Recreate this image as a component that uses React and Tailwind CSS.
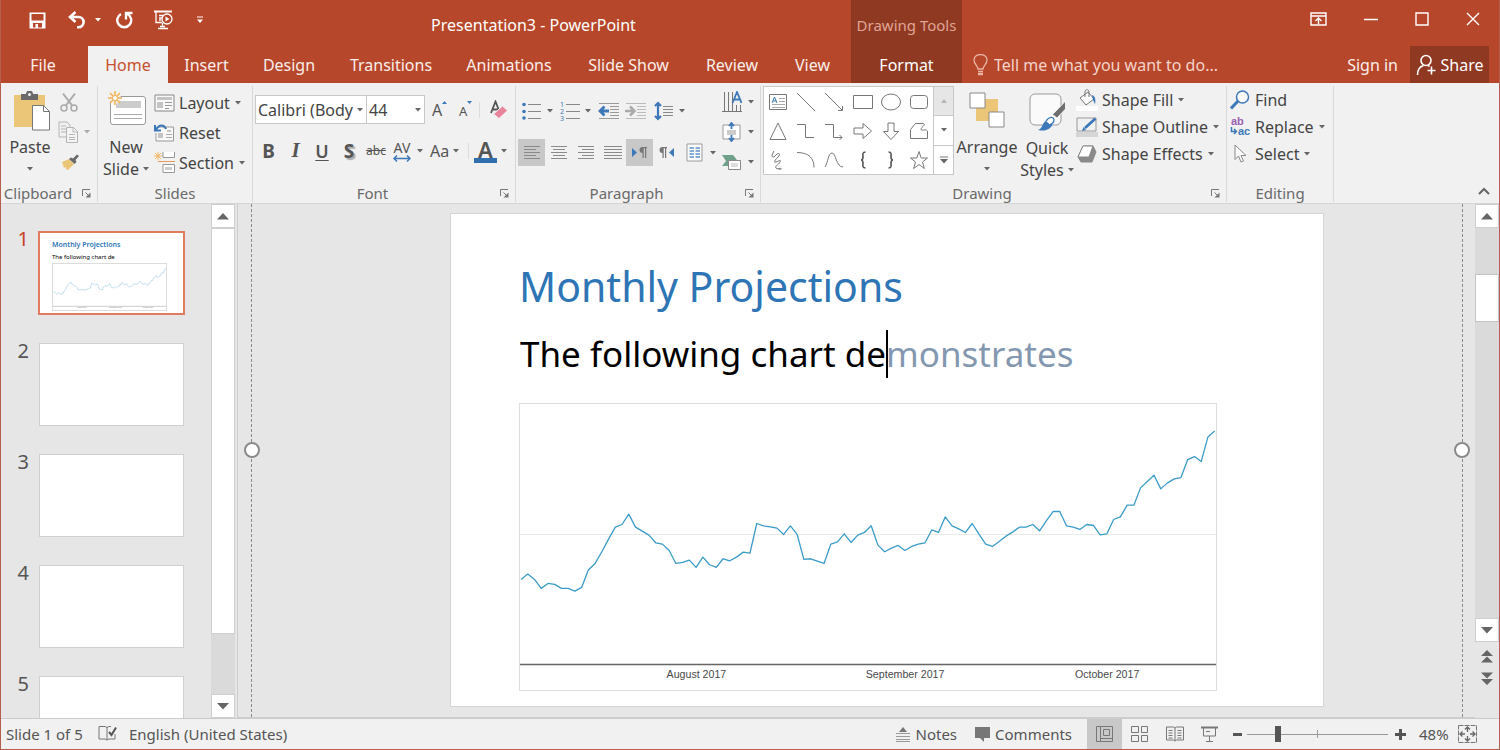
import React from "react";

/* ---------- data ---------- */

const DAILY = [
  539, 523, 539, 566, 551, 554, 566, 566, 574, 563, 511, 491, 456, 418, 382, 374, 343, 382, 394, 406, 429, 433, 452,
  491, 488, 481, 503, 472, 495, 503, 477, 483, 472, 457, 460, 371, 378, 381, 385, 404, 378, 404, 479, 477, 484, 491,
  433, 426, 402, 428, 406, 398, 378, 436, 456, 445, 437, 452, 440, 433, 429, 390, 398, 351, 378, 387, 398, 371, 403,
  433, 440, 425, 409, 397, 382, 382, 374, 393, 363, 335, 335, 378, 382, 389, 374, 377, 405, 402, 359, 351, 316, 316,
  264, 245, 226, 267, 249, 237, 233, 179, 170, 185, 111, 93,
];
const LINE = DAILY.map((v, i) => `${((i * 2084) / (DAILY.length - 1) + 3).toFixed(1)},${v - 12}`).join(" ");

const TABS = [
  ["File", "w-[84px]"],
  ["Home", "w-[80px]"],
  ["Insert", "w-[77px]"],
  ["Design", "w-[88px]"],
  ["Transitions", "w-[116px]"],
  ["Animations", "w-[120px]"],
  ["Slide Show", "w-[119px]"],
  ["Review", "w-[88px]"],
  ["View", "w-[73px]"],
];

/* ---------- small parts ---------- */

function Svg({ w = 20, h = 20, children, className = "", ...rest }) {
  return (
    <svg
      width={w}
      height={h}
      viewBox={`0 0 ${w} ${h}`}
      fill="none"
      stroke="#777"
      className={`shrink-0 ${className}`}
      aria-hidden="true"
      {...rest}
    >
      {children}
    </svg>
  );
}

function Caret({ color = "#666", className = "" }) {
  return (
    <Svg w={6} h={4} className={className}>
      <path d="M0 0h6L3 3.6z" fill={color} stroke="none" />
    </Svg>
  );
}

function Btn({ label, className = "", children }) {
  return (
    <button type="button" aria-label={label} className={`flex shrink-0 items-center ${className}`}>
      {children}
    </button>
  );
}

function Launcher({ label }) {
  return (
    <Btn label={label}>
      <Svg w={9} h={9}>
        <path d="M.5 7V.5H8M3.500 3.500 7 7" />
        <path d="M8.500 3.500v5h-5z" fill="#777" stroke="none" />
      </Svg>
    </Btn>
  );
}

function Group({ label, launcher, className = "", children }) {
  return (
    <section aria-label={label} className={`flex shrink-0 flex-col ${className}`}>
      <div className="flex h-[100px]">{children}</div>
      <div className="flex h-5 items-center text-[15px] leading-5 text-[#6a6a6a]">
        <span className={`flex-1 text-center ${launcher ? "pr-2" : ""}`}>{label}</span>
        {launcher && (
          <span className="pr-[6px]">
            <Launcher label={`${label} settings`} />
          </span>
        )}
      </div>
    </section>
  );
}

function Divider() {
  return <div className="mt-[3px] mb-px w-px shrink-0 bg-[#d9d9d9]" />;
}

function Command({ icon, text, caret, className = "h-[30px]" }) {
  return (
    <button type="button" className={`flex items-center gap-[5px] text-[16px] text-[#444] ${className}`}>
      <span className="flex w-5 justify-center">{icon}</span>
      <span className="whitespace-nowrap">{text}</span>
      {caret && <Caret />}
    </button>
  );
}

function Lines({ rows, w = 18, color = "#8a8a8a" }) {
  return (
    <Svg w={w} h={18} stroke={color}>
      {rows.map(([a, b], i) => (
        <path key={i} d={`M${a} ${2.5 + i * 3}H${b}`} />
      ))}
    </Svg>
  );
}

function Chart({ small = false, className = "" }) {
  return (
    <svg viewBox="0 0 2091 858" className={className} role="img" aria-label="Monthly projections line chart">
      {!small && <path d="M0 392H2091" stroke="#e9e9e9" strokeWidth="1" vectorEffect="non-scaling-stroke" />}
      <path
        d="M0 783H2091"
        stroke={small ? "#cccccc" : "#666"}
        strokeWidth={small ? 1 : 1.5}
        vectorEffect="non-scaling-stroke"
      />
      <polyline
        points={LINE}
        fill="none"
        stroke={small ? "#b3d5e6" : "#3b9bc8"}
        strokeWidth={small ? 0.8 : 1.3}
        strokeLinejoin="round"
        vectorEffect="non-scaling-stroke"
      />
      <g fill={small ? "#888" : "#4a4a4a"} fontSize="32" textAnchor="middle" fontFamily='"Liberation Sans", sans-serif'>
        <text x="530" y="823">August 2017</text>
        <text x="1157" y="823">September 2017</text>
        <text x="1764" y="823">October 2017</text>
      </g>
    </svg>
  );
}

/* ---------- header ---------- */

function QuickAccess() {
  return (
    <div className="flex h-[46px] items-center pl-7 text-white">
      <div className="flex items-center pb-[6px]">
        <Btn label="Save" className="w-[39px]">
          <Svg w={17} h={17} stroke="none">
            <path
              d="M.5.5h16v16H.5zM2.500 2v6.500h12V2zM4 11v4.500h2.500V12H9v3.500h4V11z"
              fill="#fff"
              fillRule="evenodd"
            />
          </Svg>
        </Btn>
        <Btn label="Undo" className="w-[27px]">
          <Svg w={18} h={18} stroke="#fff" strokeWidth="2.600">
            <path d="M7.500 1 2 6l5.500 5M2.500 6h8a5 5 0 0 1 0 10.200H9" />
          </Svg>
        </Btn>
        <Btn label="Undo history" className="w-[20px]">
          <Caret color="#fff" />
        </Btn>
        <Btn label="Repeat" className="w-[38px]">
          <Svg w={18} h={18} stroke="#fff" strokeWidth="2.400">
            <path d="M6 3A7 7 0 1 0 12.500 3M11 8.500V2h6.500" />
          </Svg>
        </Btn>
        <Btn label="Start from beginning" className="w-[44px]">
          <Svg w={20} h={20} stroke="#fff" strokeWidth="1.300">
            <path d="M1 1.500h18" strokeWidth="2" />
            <path d="M3 2v10.500h6M6 5.500h4M6 8h3M6 10h2M9.500 13v4M5 18.500h10M7 16.500h5" />
            <circle cx="14" cy="9" r="5" />
            <path d="m12.500 6.500 4 2.500-4 2.500z" fill="#fff" stroke="none" />
          </Svg>
        </Btn>
        <Btn label="Customize toolbar">
          <Svg w={6} h={8}>
            <path d="M0 1h6" stroke="#fff" />
            <path d="M0 3.500h6L3 7z" fill="#fff" stroke="none" />
          </Svg>
        </Btn>
      </div>
      <h1 className="flex-1 pt-[3px] pl-[15px] text-center text-[16px]">Presentation3 - PowerPoint</h1>
    </div>
  );
}

function Header() {
  return (
    <header className="flex h-[83px] shrink-0 bg-[#b7472a] text-white">
      <div className="flex flex-col">
        <QuickAccess />
        <nav className="flex h-[37px]">
          {TABS.map(([name, w]) => (
            <button
              key={name}
              type="button"
              className={`text-[16px] ${w} ${
                name === "Home" ? "ml-[3px] bg-[#f1f1f1] text-[#c8502f]" : "text-[#fbeeea]"
              }`}
            >
              {name}
            </button>
          ))}
        </nav>
      </div>
      <div className="ml-[2px] flex w-[111px] flex-col bg-[#8f3822]">
        <div className="flex h-[46px] items-center justify-center pt-1 text-[15px] whitespace-nowrap text-[#e0a595]">
          Drawing Tools
        </div>
        <button type="button" className="h-[37px] text-[16px]">
          Format
        </button>
      </div>
      <div className="flex flex-1 flex-col">
        <div className="flex h-[46px] items-center justify-end gap-[37px] pr-[19px] pb-2">
          <Btn label="Ribbon display options">
            <Svg w={17} h={15} stroke="#fff" strokeWidth="1.400">
              <path d="M1 1h15v12H1zM1 4h15M8.500 12V6.500M5.500 9l3-3 3 3" />
            </Svg>
          </Btn>
          <Btn label="Minimize">
            <Svg w={14} h={14} stroke="#fff" strokeWidth="1.500">
              <path d="M0 7.500h14" />
            </Svg>
          </Btn>
          <Btn label="Maximize">
            <Svg w={14} h={14} stroke="#fff" strokeWidth="1.400">
              <path d="M1 1h12v12H1z" />
            </Svg>
          </Btn>
          <Btn label="Close">
            <Svg w={14} h={14} stroke="#fff" strokeWidth="1.400">
              <path d="m1 1 12 12M13 1 1 13" />
            </Svg>
          </Btn>
        </div>
        <div className="flex h-[37px] items-center pr-[10px] text-[16px]">
          <label className="flex flex-1 items-center gap-[6px] pl-[11px]">
            <Svg w={15} h={22} stroke="#e8b5a6" strokeWidth="1.300">
              <path d="M5 15c0-3-4-4.500-4-9a6.500 5.500 0 0 1 13 0c0 4.500-4 6-4 9zM5 17.500h5" />
              <path d="M5 20h5" strokeWidth="2.400" />
            </Svg>
            <input
              aria-label="Tell me what you want to do"
              placeholder="Tell me what you want to do..."
              className="w-full bg-transparent outline-none placeholder:text-[#f4d3ca] placeholder:opacity-100"
            />
          </label>
          <button type="button" className="mr-3 whitespace-nowrap text-[#fbeeea]">
            Sign in
          </button>
          <button type="button" className="flex h-[37px] w-[79px] items-center justify-center gap-[5px] bg-[#8f3822]">
            <Svg w={20} h={22} stroke="#fff" strokeWidth="1.600">
              <circle cx="10" cy="6.500" r="5" />
              <path d="M1.500 21c0-5 2.500-8.500 6-9.500M12 11.500l1.500 1M15.500 12.500v8M11.500 16.500h8" />
            </Svg>
            Share
          </button>
        </div>
      </div>
    </header>
  );
}

/* ---------- ribbon ---------- */

function Clipboard() {
  return (
    <Group label="Clipboard" launcher className="w-[95px]">
      <button type="button" className="flex w-14 flex-col items-center pt-2 text-[16px] leading-6 text-[#444]">
        <Svg w={36} h={40} className="ml-1">
          <path d="M0 4h31v32H0z" fill="#ecc678" stroke="none" />
          <path d="M7 3h5a3.500 3.500 0 0 1 7 0h5v6H7z" fill="#6a6a6a" stroke="none" />
          <circle cx="15.500" cy="3.500" r="1.500" fill="#f1f1f1" stroke="none" />
          <path d="M18.500 14.500h11l6 6v18.500h-17z" fill="#fff" />
          <path d="M29.500 14.500v6h6" />
        </Svg>
        <span className="mt-1">Paste</span>
        <Caret className="mt-2" />
      </button>
      <div className="flex flex-col pt-1">
        <Btn label="Cut" className="h-[30px] pl-[2px]">
          <Svg w={18} h={20} stroke="#aaa" strokeWidth="1.500">
            <path d="M3 1.500 12.500 14M15 1.500 5.500 14" strokeWidth="2" />
            <circle cx="4" cy="16" r="3" />
            <circle cx="14" cy="16" r="3" />
          </Svg>
        </Btn>
        <Btn label="Copy" className="h-[30px] gap-[6px]">
          <Svg w={20} h={22} stroke="#b5b5b5">
            <path d="M1 1h8l3 3v12H1zM3 5h5M3 8h5M3 11h5" />
            <path d="M8.500 6.500h7l4 4v11h-11z" fill="#f4f4f4" />
            <path d="M15 6.500v4.500h4M11 13.500h6M11 16.500h6M11 18.500h6" />
          </Svg>
          <Caret color="#aaa" />
        </Btn>
        <Btn label="Format painter" className="h-[30px] pl-[3px]">
          <Svg w={18} h={16} stroke="none">
            <path d="M1 8 8 5l5 5-6 6-2-1v-2l-2 1z" fill="#ecc678" />
            <path d="m8 5 2-1.500 2 1L16 .5 18 2l-3.500 4 1 2-2 2z" fill="#6a6a6a" />
          </Svg>
        </Btn>
      </div>
    </Group>
  );
}

const Spark = ({ x, y }) => (
  <path
    transform={`translate(${x} ${y})`}
    d="M0-7v14M-7 0H7M-5-5 5 5M5-5-5 5"
    stroke="#eeb25a"
    strokeWidth="1.500"
  />
);

function Slides() {
  return (
    <Group label="Slides" className="w-[154px]">
      <button type="button" className="flex w-[56px] flex-col items-center pt-[7px] text-[16px] leading-[22px] text-[#444]">
        <Svg w={39} h={36}>
          <rect x="3.500" y="6.500" width="35" height="28" rx="2.500" fill="#fff" stroke="#999" />
          <path d="M9 11h25v7H9z" fill="#ccc" stroke="none" />
          <path d="M7 24.500h28M7 28.500h28" stroke="#aaa" />
          <circle cx="8" cy="8" r="6" fill="#f6efe2" stroke="none" />
          <Spark x={8} y={8} />
          <circle cx="8" cy="8" r="2.500" fill="#fff" stroke="#eeb25a" />
        </Svg>
        <span className="mt-[10px]">New</span>
        <span className="flex items-center gap-1">
          Slide <Caret />
        </span>
      </button>
      <div className="flex flex-col pt-[5px]">
        <Command
          caret
          text="Layout"
          icon={
            <Svg w={21} h={18}>
              <path d="M1 1h19v16H1z" fill="#f8f8f8" stroke="#888" />
              <path d="M3 3h15v3H3zM3 8h6v6H3z" fill="#c4c4c4" stroke="none" />
              <path d="M11 8.500h7M11 11.500h7M11 14.500h4" stroke="#999" />
            </Svg>
          }
        />
        <Command
          text="Reset"
          icon={
            <Svg w={21} h={18}>
              <path d="M4 3h15.500v14H2V9" fill="#f8f8f8" stroke="#999" />
              <path d="M4 9h5v5H4zM13 6h4v2h-4z" fill="#c4c4c4" stroke="none" />
              <path d="M12 10.500h6M12 13.500h6" stroke="#aaa" />
              <path d="M2 5.500c3-5 8-5.500 10-.5M1 1v5.500h6" stroke="#3d78b8" strokeWidth="2" />
            </Svg>
          }
        />
        <Command
          caret
          text="Section"
          icon={
            <Svg w={21} h={22} stroke="#999">
              <path d="M9 0v5.500h11.500V0M9 12.500h11.500v8H9z" fill="#fff" />
              <path d="M4 9.500h17" stroke="#e89b5c" />
              <path d="M11 15h7v3h-7z" fill="#ccc" stroke="none" />
              <g transform="translate(4 4) scale(.6)">
                <Spark x={0} y={0} />
              </g>
            </Svg>
          }
        />
      </div>
    </Group>
  );
}

function FontGroup() {
  return (
    <Group label="Font" launcher className="w-[262px]">
      <div className="flex flex-col pl-[2px]">
        <div className="mt-3 flex h-[29px] items-center">
          <div className="relative flex h-full items-center border border-[#c8c8c8] bg-white">
            <select
              aria-label="Font name"
              className="h-full w-[110px] appearance-none overflow-hidden bg-transparent pr-[6px] pl-[2px] text-[16px] text-[#444]"
            >
              <option>Calibri (Body</option>
            </select>
            <Caret className="pointer-events-none absolute right-[3px]" />
          </div>
          <div className="relative -ml-px flex h-full items-center border border-[#c8c8c8] bg-white">
            <select aria-label="Font size" className="h-full w-[57px] appearance-none bg-transparent pl-[2px] text-[16px] text-[#444]">
              <option>44</option>
            </select>
            <Caret className="pointer-events-none absolute right-[3px]" />
          </div>
          <Btn label="Increase font size" className="ml-[7px] h-6 w-[27px] items-end text-[16px] leading-6 text-[#555]">
            A
            <Svg w={5} h={4} className="mb-[17px]">
              <path d="M0 3h5L2.500 0z" fill="#3d78b8" stroke="none" />
            </Svg>
          </Btn>
          <Btn label="Decrease font size" className="h-6 w-[20px] items-end text-[13px] leading-[22px] text-[#555]">
            A
            <Svg w={5} h={4} className="mb-[17px]">
              <path d="M0 0h5L2.500 3z" fill="#3d78b8" stroke="none" />
            </Svg>
          </Btn>
          <div className="mr-[9px] h-4 w-px bg-[#dcdcdc]" />
          <Btn label="Clear formatting">
            <Svg w={20} h={20} stroke="#555" strokeWidth="1.800">
              <path d="M2 13 6.500 1.500 11 13M3.500 9.500H9" />
              <path d="m4.500 14 9-8 5 4.500-8.500 8z" fill="#e8849a" stroke="#f1f1f1" strokeWidth="1" />
            </Svg>
          </Btn>
        </div>
        <div className="mt-[14px] flex h-[26px] items-center text-[#555]">
          <button type="button" className="w-[27px] text-center text-[19px] font-bold">
            B
          </button>
          <button type="button" className="w-[27px] text-center font-['Liberation_Serif',serif] text-[21px] font-bold italic">
            I
          </button>
          <button type="button" className="w-[26px] text-center text-[18px] font-semibold underline decoration-1 underline-offset-2">
            U
          </button>
          <button type="button" className="w-[28px] text-center text-[19px] font-bold text-shadow-[2px_2px_1px_#aaa]">
            S
          </button>
          <button type="button" className="w-[26px] text-center text-[12px] line-through">
            abc
          </button>
          <Btn label="Character spacing" className="ml-1 w-[37px] gap-[6px]">
            <span className="flex flex-col items-center text-[14px] leading-[14px]">
              AV
              <Svg w={18} h={7} stroke="#3d78b8" strokeWidth="1.500">
                <path d="M1 3.500h16M4 .5l-3 3 3 3M14 .5l3 3-3 3" />
              </Svg>
            </span>
            <Caret />
          </Btn>
          <button type="button" className="flex w-[38px] items-center gap-1 text-[16px]">
            Aa
            <Caret />
          </button>
          <div className="mr-[5px] h-4 w-px bg-[#dcdcdc]" />
          <Btn label="Font color" className="gap-1">
            <span className="flex flex-col items-center text-[22px] leading-[18px] font-semibold">
              A
              <span className="h-[5px] w-[23px] bg-[#2f6fae]" />
            </span>
            <Caret />
          </Btn>
        </div>
      </div>
    </Group>
  );
}

function Paragraph() {
  const cell = "flex h-[27px] w-[27px] shrink-0 items-center justify-center";
  return (
    <Group label="Paragraph" launcher className="w-[244px]">
      <div className="flex w-[205px] flex-col pl-[2px]">
        <div className="mt-[14px] flex h-7 items-center">
          <Btn label="Bullets" className="w-[38px] gap-[6px] pl-1">
            <Svg w={19} h={18} stroke="#888">
              <path d="M6 2.500h13M6 9.500h13M6 16.500h13" />
              <g fill="#3d78b8" stroke="none">
                <circle cx="2" cy="2.500" r="1.800" />
                <circle cx="2" cy="9.500" r="1.800" />
                <circle cx="2" cy="16" r="1.800" />
              </g>
            </Svg>
            <Caret />
          </Btn>
          <Btn label="Numbering" className="w-[40px] gap-[5px] pl-1">
            <Svg w={20} h={26} stroke="#888">
              <path d="M6 6.500h14M6 13.500h14M6 20.500h14" />
              <g fill="#3d78b8" stroke="none" fontSize="7">
                <text x="0" y="9">1</text>
                <text x="0" y="16">2</text>
                <text x="0" y="23">3</text>
              </g>
            </Svg>
            <Caret />
          </Btn>
          <Btn label="Decrease indent" className="w-[27px] pl-[2px]">
            <Svg w={21} h={18} stroke="#999">
              <path d="M1 1.500h20M12 4.500h9M12 7.500h9M12 10.500h9M12 13.500h9M1 16.500h20" />
              <path d="M11 9H3M6.500 4.500 2 9l4.500 4.500" stroke="#3d78b8" strokeWidth="2.800" />
            </Svg>
          </Btn>
          <Btn label="Increase indent" className="w-[28px] pl-[2px]">
            <Svg w={21} h={18} stroke="#bbb">
              <path d="M1 1.500h20M12 4.500h9M12 7.500h9M12 10.500h9M12 13.500h9M1 16.500h20" />
              <path d="M0 9h8M5 4.500 9.500 9 5 13.500" stroke="#aaa" strokeWidth="2.500" />
            </Svg>
          </Btn>
          <Btn label="Line spacing" className="gap-[6px] pl-[3px]">
            <Svg w={19} h={20} stroke="#888">
              <path d="M9 5.500h10M9 8.500h10M9 11.500h10M9 14.500h10" />
              <path d="M4 2v16M1 5l3-3 3 3M1 15l3 3 3-3" stroke="#3d78b8" strokeWidth="2.200" />
            </Svg>
            <Caret />
          </Btn>
        </div>
        <div className="mt-[14px] flex h-[27px] items-center">
          <button type="button" aria-label="Align left" className={`${cell} bg-[#c8c8c8]`}>
            <Lines rows={[[1, 17], [1, 13], [1, 17], [1, 13], [1, 17]]} />
          </button>
          <button type="button" aria-label="Center" className={cell}>
            <Lines rows={[[1, 17], [3, 15], [1, 17], [3, 15], [1, 17]]} />
          </button>
          <button type="button" aria-label="Align right" className={cell}>
            <Lines rows={[[1, 17], [5, 17], [1, 17], [5, 17], [1, 17]]} />
          </button>
          <button type="button" aria-label="Justify" className={cell}>
            <Lines rows={[[0, 18], [0, 18], [0, 18], [0, 18], [0, 18]]} />
          </button>
          <button type="button" aria-label="Left to right" className={`${cell} bg-[#c8c8c8]`}>
            <Svg w={17} h={14} stroke="none">
              <path d="M1 2v9l5-4.500z" fill="#3d78b8" />
              <path d="M16 1h-4.500a3 3 0 0 0 0 6v5h1.200V2.200H14V12h1.200V2.200h.8z" fill="#777" />
            </Svg>
          </button>
          <button type="button" aria-label="Right to left" className={cell}>
            <Svg w={17} h={14} stroke="none">
              <path d="M16 2v9l-5-4.500z" fill="#3d78b8" />
              <path d="M9 1H4.500a3 3 0 0 0 0 6v5h1.200V2.200H7V12h1.200V2.200H9z" fill="#777" />
            </Svg>
          </button>
          <Btn label="Columns" className="gap-[7px] pl-[6px]">
            <Svg w={17} h={19}>
              <path d="M1 1h15v17H1z" fill="#fff" stroke="#999" />
              <path d="M3.500 5h4.500M3.500 8h4.500M3.500 11h4.500M3.500 14h4.500M9.500 5H14M9.500 8H14M9.500 11H14M9.500 14H14" stroke="#86abd6" strokeWidth="2" />
            </Svg>
            <Caret />
          </Btn>
        </div>
      </div>
      <div className="flex flex-col pt-1">
        <Btn label="Text direction" className="h-[30px] gap-[6px] pl-px">
          <Svg w={20} h={22} stroke="#777">
            <path d="M2.500 1v19M6.500 1v19M10.500 1v19M14.500 14v6M18.500 14v6M0 20.500h20" />
            <path d="M10.500 12 15 1l4.500 11M12 8.500h6" stroke="#3d78b8" strokeWidth="1.800" />
          </Svg>
          <Caret />
        </Btn>
        <Btn label="Align text" className="h-[30px] gap-[6px]">
          <Svg w={21} h={20}>
            <path d="M2 3h17v14H2z" fill="#fff" stroke="#999" />
            <path d="M6 8h9v5H6z" fill="#ccc" stroke="none" />
            <path d="M10.500 7V2M8 4l2.500-3L13 4M10.500 13v5M8 16l2.500 3 2.500-3" stroke="#3d78b8" strokeWidth="1.800" />
          </Svg>
          <Caret />
        </Btn>
        <Btn label="Convert to SmartArt" className="h-[30px] gap-[6px]">
          <Svg w={21} h={16}>
            <path d="M1 1h11l4 5-4 6H1l4-5z" fill="#6fa08a" stroke="none" />
            <path d="M7.500 6.500h12v9h-12z" fill="#fff" stroke="#888" />
            <path d="M10 9h7v4h-7z" fill="#ddd" stroke="none" />
          </Svg>
          <Caret />
        </Btn>
      </div>
    </Group>
  );
}

const SHAPES = [
  ["Text box", <g key="0"><path d="M1.500 2.500h17v15h-17z" /><path d="m4 11 2.500-6L9 11M5 9h3.500" stroke="#3d78b8" /><path d="M11 6.500h6M11 9.500h6M4 12.500h13M4 15.500h13" stroke="#aaa" /></g>],
  ["Line", <path key="1" d="m1 1 18 18" />],
  ["Arrow line", <path key="2" d="m1 1 17 17M18.500 14v4.500H14" />],
  ["Rectangle", <path key="3" d="M.5 3.500h19v13H.5z" />],
  ["Oval", <ellipse key="4" cx="10" cy="10" rx="9.500" ry="8" />],
  ["Rounded rectangle", <rect key="5" x="1.500" y="3.500" width="17" height="13" rx="3" />],
  ["Triangle", <path key="6" d="M10 2 18 18.500H2z" />],
  ["Elbow connector", <path key="7" d="M1 3.500h8.500v13H18" />],
  ["Elbow arrow", <path key="8" d="M1 3.500h8.500v13H18M15.500 14l2.500 2.500-2.500 2.500" />],
  ["Right arrow", <path key="9" d="M1 7h9V2.500l8.500 7.500-8.500 7.500V13H1z" />],
  ["Down arrow", <path key="10" d="M7 2h6v8.500h4.500L10 18.500 2.500 10.500H7z" />],
  ["Freeform", <path key="11" d="M1.500 17.500v-9l5-6h8c3 2-4 4-2 6.500 1.500 1 4-1.500 6 1v7.500z" />],
  ["Scribble", <path key="12" d="M6 1C2 7 5 9 8 5c3-3 5-1 2 2s-5 6-2 5 5-3 4 0-6 4-4 6 6-1 5 1-2 1-2 0" />],
  ["Arc", <path key="13" d="M1 2.500c12 0 17 6 17 15" />],
  ["Curve", <path key="14" d="M1 17C4 13 4 3 8 3s4 14 11 14" />],
  ["Left brace", <path key="15" d="M12.500 2C9 2 10 5 10 7s-1 3-2 3c1 0 2 1 2 3s-1 5 2.500 5" stroke="#555" strokeWidth="1.600" />],
  ["Right brace", <path key="16" d="M7.500 2C11 2 10 5 10 7s1 3 2 3c-1 0-2 1-2 3s1 5-2.500 5" stroke="#555" strokeWidth="1.600" />],
  ["Star", <path key="17" d="m10 1.500 2.200 6.500h6.300l-5 4 1.900 6.500-5.400-4-5.400 4L6.500 12l-5-4h6.300z" />],
];

function Drawing() {
  return (
    <Group label="Drawing" launcher className="w-[465px]">
      <div className="mt-[3px] ml-[2px] flex h-[89px] w-[191px] border border-[#c8c8c8] bg-white">
        <div className="grid flex-1 grid-cols-6">
          {SHAPES.map(([name, d]) => (
            <button key={name} type="button" aria-label={name} className="flex items-center justify-center">
              <Svg w={20} h={20}>{d}</Svg>
            </button>
          ))}
        </div>
        <div className="flex w-5 flex-col divide-y divide-[#c8c8c8] border-l border-[#c8c8c8]">
          <Btn label="Previous shapes" className="flex-1 justify-center bg-[#e6e6e6]">
            <Svg w={6} h={4}>
              <path d="M0 4h6L3 0z" fill="#b5b5b5" stroke="none" />
            </Svg>
          </Btn>
          <Btn label="Next shapes" className="flex-1 justify-center">
            <Caret />
          </Btn>
          <Btn label="More shapes" className="flex-1 justify-center">
            <Svg w={8} h={8}>
              <path d="M0 1h8" />
              <path d="M0 3h8L4 7.500z" fill="#666" stroke="none" />
            </Svg>
          </Btn>
        </div>
      </div>
      <button type="button" className="flex w-[66px] flex-col items-center pt-[9px] text-[16px] leading-6 text-[#444]">
        <Svg w={36} h={36}>
          <path d="M7 7h22v22H7z" fill="#ecc678" stroke="none" />
          <path d="M1 1h15v15H1zM20 20h15v15H20z" fill="#fff" stroke="#888" />
        </Svg>
        <span className="mt-[7px]">Arrange</span>
        <Caret className="mt-2" />
      </button>
      <button type="button" className="flex w-[54px] flex-col items-center pt-[9px] text-[16px] leading-[22px] text-[#444]">
        <Svg w={38} h={40}>
          <rect x="2" y="2" width="31" height="31" rx="5" fill="#fafafa" stroke="#999" />
          <path d="M37.500 9v8L29 26l-4.500-3.500z" fill="#6e6e6e" stroke="#f1f1f1" />
          <path d="M10 38c5-1 4-9 10-10 5 0 6 5 2 8s-8 3-12 2z" fill="#3d78b8" stroke="none" />
          <path d="M18 29c3-4 7-5 8-1.500 0 2.500-2 4.500-4 5" fill="#fff" stroke="#3d78b8" strokeWidth="1.300" />
        </Svg>
        <span className="mt-[5px]">Quick</span>
        <span className="flex items-center gap-1 whitespace-nowrap">
          Styles <Caret />
        </span>
      </button>
      <div className="flex flex-col pt-[3px] pl-[3px]">
        <Command
          caret
          className="h-[27px]"
          text="Shape Fill"
          icon={
            <Svg w={22} h={22}>
              <path d="M0 17h22v5H0z" fill="#fff" stroke="none" />
              <path d="m4 9 8-6 6 7-8 6zM9 8V3c0-3 4-3 4 0v5" fill="#fafafa" />
              <path d="M16 6c3 1 4 4 3 9l-2-4z" fill="#3d78b8" stroke="none" />
            </Svg>
          }
        />
        <Command
          caret
          className="h-[27px]"
          text="Shape Outline"
          icon={
            <Svg w={22} h={20}>
              <path d="M1 1h19v13H1z" stroke="#999" />
              <path d="M0 15h22v5H0z" fill="#d5d5d5" stroke="none" />
              <path d="M9 11 19.500 1.500" stroke="#3d78b8" strokeWidth="2.800" />
              <path d="m6 14 1.500-4 2.500 3z" fill="#3d78b8" stroke="none" />
            </Svg>
          }
        />
        <Command
          caret
          className="h-[27px]"
          text="Shape Effects"
          icon={
            <Svg w={20} h={18} strokeLinejoin="round">
              <path d="M6 1h10l3 6-4 10H4l-3-5z" fill="#8a8a8a" stroke="#8a8a8a" />
              <path d="M6 1h10l-4 11H1z" fill="#fff" stroke="#888" />
            </Svg>
          }
        />
      </div>
    </Group>
  );
}

function Editing() {
  return (
    <Group label="Editing" className="w-[106px]">
      <div className="flex flex-col pt-[3px] pl-[3px]">
        <Command
          className="h-[27px]"
          text="Find"
          icon={
            <Svg w={20} h={20} stroke="#3d78b8">
              <circle cx="12.500" cy="7" r="6" strokeWidth="1.500" fill="#fafafa" />
              <path d="m8 11-7 7.500" strokeWidth="3" />
            </Svg>
          }
        />
        <Command
          caret
          className="h-[27px]"
          text="Replace"
          icon={
            <Svg w={20} h={26} stroke="none">
              <g fontSize="11" fontWeight="700" fontFamily='"Liberation Sans", sans-serif'>
                <text x="1" y="11" fill="#9a5fb0">ab</text>
                <text x="8" y="21" fill="#3d78b8">ac</text>
              </g>
              <path d="M1.500 13v4.500h5M4 15l2.500 2.500L4 20" fill="none" stroke="#3d78b8" strokeWidth="1.500" />
            </Svg>
          }
        />
        <Command
          caret
          className="h-[27px]"
          text="Select"
          icon={
            <Svg w={13} h={19} stroke="#888">
              <path d="M1 1v14.500l3.500-3.500 2.500 6 2.500-1L7 11.500h5z" fill="#fafafa" />
            </Svg>
          }
        />
      </div>
    </Group>
  );
}

function Ribbon() {
  return (
    <div className="flex h-[121px] shrink-0 items-stretch border-b border-[#d5d5d5] bg-[#f1f1f1] pl-px">
      <Clipboard />
      <Divider />
      <Slides />
      <Divider />
      <FontGroup />
      <Divider />
      <Paragraph />
      <Divider />
      <Drawing />
      <Divider />
      <Editing />
      <Divider />
      <div className="flex flex-1 items-end justify-end pr-[9px] pb-2">
        <Btn label="Collapse ribbon">
          <Svg w={12} h={8} stroke="#666" strokeWidth="2">
            <path d="m1 7 5-5 5 5" />
          </Svg>
        </Btn>
      </div>
    </div>
  );
}

/* ---------- workspace ---------- */

function ScrollButton({ label, down }) {
  return (
    <Btn label={label} className="h-6 w-full justify-center border border-[#cfcfcf] bg-white">
      <Svg w={12} h={7}>
        <path d={down ? "M0 0h12L6 6.500z" : "M0 6.500h12L6 0z"} fill="#666" stroke="none" />
      </Svg>
    </Btn>
  );
}

function Thumbnails() {
  return (
    <aside className="flex shrink-0 border-r border-[#cccccc] pr-[2px]">
      <ol className="flex w-[210px] flex-col gap-7 overflow-hidden pt-[27px]">
        {[1, 2, 3, 4, 5].map((n) => (
          <li key={n} className="flex shrink-0">
            <span
              className={`w-[37px] pr-[9px] text-right text-[20px] leading-4 ${n === 1 ? "text-[#c8402a]" : "text-[#555]"}`}
            >
              {n}
            </span>
            {n === 1 ? (
              <button
                type="button"
                className="flex h-[84px] w-[147px] flex-col border-2 border-[#e27a5f] bg-white pt-[7px] pl-3 text-left"
              >
                <span className="text-[7px] leading-[10px] font-semibold text-[#2e75b6]">Monthly Projections</span>
                <span className="text-[6px] leading-[14px] text-black">The following chart de</span>
                <Chart small className="-mt-px w-[115px] border border-[#dcdcdc]" />
              </button>
            ) : (
              <button
                type="button"
                aria-label={`Slide ${n}`}
                className="ml-px h-[83px] w-[145px] border border-[#d0d0d0] bg-white"
              />
            )}
          </li>
        ))}
      </ol>
      <div className="flex w-6 flex-col bg-[#dadada]">
        <ScrollButton label="Scroll slides up" />
        <div className="min-h-0 flex-[406] border border-[#cfcfcf] bg-white" />
        <div className="flex-[60]" />
        <ScrollButton label="Scroll slides down" down />
      </div>
    </aside>
  );
}

function Handle({ side }) {
  return (
    <span
      className={`absolute top-[48%] z-10 size-4 -translate-y-1/2 rounded-full border-2 border-[#8a8a8a] bg-white ${side}`}
    />
  );
}

function Canvas() {
  return (
    <main className="flex min-w-0 flex-1 border-b border-[#cccccc] pr-3 pl-[13px]">
      <div className="relative flex flex-1 border-x border-dashed border-[#8a8a8a] pt-[9px] pr-[138px] pb-[10px] pl-[198px]">
        <Handle side="-left-[8px]" />
        <Handle side="-right-[8px]" />
        <article className="flex min-w-0 flex-1 flex-col border border-[#d5d5d5] bg-white pr-[106px] pl-[68px]">
          <h2 className="mt-[42px] text-[41px] leading-[60px] whitespace-nowrap text-[#2e75b6]">Monthly Projections</h2>
          <p className="mt-[14px] flex items-center pl-px text-[35px] leading-[48px] whitespace-nowrap text-black">
            The following chart de
            <span className="-mr-[2px] h-12 w-[2px] bg-black" />
            <span className="text-[#8497b0]">monstrates</span>
          </p>
          <Chart className="mt-[25px] w-full border border-[#dedede]" />
        </article>
      </div>
    </main>
  );
}

function PageScroll() {
  const double = (d, label) => (
    <Btn label={label} className="h-[23px] justify-center">
      <Svg w={12} h={14}>
        <path d={d} fill="#666" stroke="none" />
      </Svg>
    </Btn>
  );
  return (
    <div className="flex w-6 shrink-0 flex-col bg-[#dadada]">
      <ScrollButton label="Previous" />
      <div className="flex-[46]" />
      <div className="flex-[46] border border-[#c4c4c4] bg-white" />
      <div className="flex-[298]" />
      <ScrollButton label="Next" down />
      <div className="flex h-[76px] flex-col bg-[#e6e6e6] pt-[2px]">
        {double("M0 7h12L6 1zM0 13.500h12l-6-6z", "Previous slide")}
        {double("M0 .5h12l-6 6zM0 7h12l-6 6z", "Next slide")}
      </div>
    </div>
  );
}

/* ---------- status bar ---------- */

function Status() {
  const view = "flex h-full w-[35px] items-center justify-center";
  return (
    <footer className="flex h-[31px] shrink-0 items-center border-t border-[#cccccc] bg-[#f1f1f1] pl-[5px] text-[15px] text-[#555]">
      <span className="w-[92px]">Slide 1 of 5</span>
      <Btn label="Spelling" className="w-[31px]">
        <Svg w={19} h={18}>
          <path d="M9 2.500V15M1 1.500h6l2 1 2-1h2M1 1.500V14h6l2 1 2-1h6V9" />
          <path d="m11 7 2.500 3L18 2.500" stroke="#555" strokeWidth="2" />
        </Svg>
      </Btn>
      <span>English (United States)</span>
      <div className="ml-auto flex h-full items-center">
        <button type="button" className="flex items-center gap-[6px]">
          <Svg w={14} h={15}>
            <path d="M7 0 3 5h8z" fill="#777" stroke="none" />
            <path d="M0 6.500h14M0 9.500h14M0 12.500h14M0 14.500h14" stroke="#999" />
          </Svg>
          Notes
        </button>
        <button type="button" className="ml-[18px] flex items-center gap-[5px]">
          <Svg w={15} h={15}>
            <path d="M0 0h15v11H9v4l-4-4H0z" fill="#777" stroke="none" />
          </Svg>
          Comments
        </button>
        <button type="button" aria-label="Normal view" className={`${view} ml-[15px] bg-[#c8c8c8]`}>
          <Svg w={17} h={16}>
            <path d="M.5.5h16v15H.5zM4.500.5v15M7.500 3.500h6v6h-6zM4.500 12.500h12" />
          </Svg>
        </button>
        <button type="button" aria-label="Slide sorter" className={view}>
          <Svg w={17} h={16}>
            <path d="M.5.5h7v6h-7zM10.500.5h6v6h-6zM.5 9.500h7v6h-7zM10.500 9.500h6v6h-6z" />
          </Svg>
        </button>
        <button type="button" aria-label="Reading view" className={view}>
          <Svg w={18} h={16}>
            <path d="M.5 1h7l1.500 1 1.500-1h7v13h-7L9 15l-1.500-1h-7zM9 2v13M2.500 4.500h4M2.500 7h4M2.500 9.500h4M2.500 12h4M11.500 4.500h4M11.500 7h4M11.500 9.500h4M11.500 12h4" />
          </Svg>
        </button>
        <button type="button" aria-label="Slide show" className={view}>
          <Svg w={17} h={16}>
            <path d="M0 1.500h17" strokeWidth="2" />
            <path d="M2.500 2v8h12V2M8.500 10v5M5 15.500h7M5 5.500h4" />
          </Svg>
        </button>
        <Btn label="Zoom out" className="w-[20px] justify-center">
          <Svg w={9} h={3}>
            <path d="M0 0h9v3H0z" fill="#555" stroke="none" />
          </Svg>
        </Btn>
        <input
          type="range"
          aria-label="Zoom"
          min="0"
          max="100"
          defaultValue="21"
          className="h-4 w-[141px] appearance-none bg-[linear-gradient(#999,#999),linear-gradient(#999,#999)] bg-[length:100%_1px,1px_8px] bg-center bg-no-repeat [&::-webkit-slider-thumb]:h-4 [&::-webkit-slider-thumb]:w-[6px] [&::-webkit-slider-thumb]:appearance-none [&::-webkit-slider-thumb]:bg-[#555]"
        />
        <Btn label="Zoom in" className="w-[24px] justify-center">
          <Svg w={11} h={11} stroke="#555" strokeWidth="3">
            <path d="M0 5.500h11M5.500 0v11" />
          </Svg>
        </Btn>
        <span className="w-[46px] pl-[7px]">48%</span>
        <Btn label="Fit slide to window" className="mr-[22px]">
          <Svg w={19} h={18}>
            <path d="M.5.5h18v17H.5z" strokeDasharray="5 1" />
            <path d="M9.500 2v5M7 4.500 9.500 2 12 4.500M9.500 16v-5M7 13.500 9.500 16l2.500-2.500M2 9h5M4.500 6.500 2 9l2.500 2.500M17 9h-5M14.500 6.500 17 9l-2.500 2.500" stroke="#666" strokeWidth="1.300" />
          </Svg>
        </Btn>
      </div>
    </footer>
  );
}

export default function App() {
  return (
    <div className="flex h-screen flex-col border-x border-b border-[#b5604c] bg-[#e6e6e6] font-['Noto_Sans',sans-serif]">
      <Header />
      <Ribbon />
      <div className="flex min-h-0 flex-1">
        <Thumbnails />
        <Canvas />
        <PageScroll />
      </div>
      <Status />
    </div>
  );
}
